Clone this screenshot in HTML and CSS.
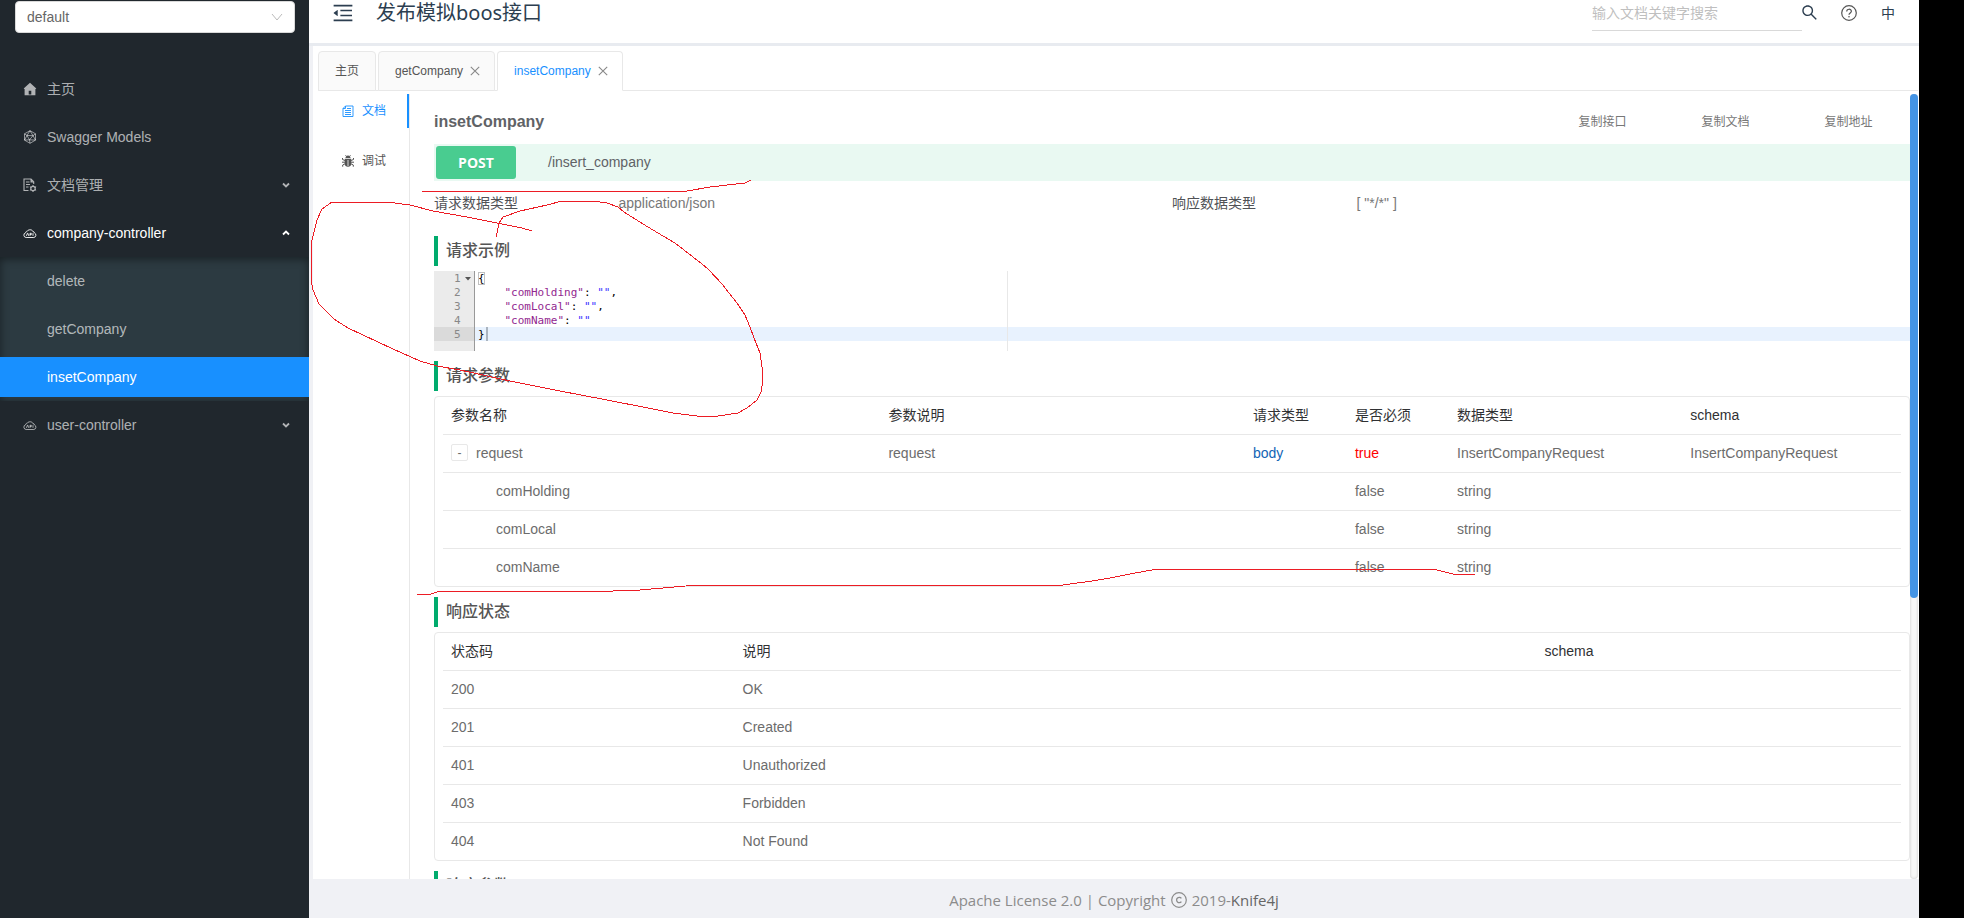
FILE: index.html
```html
<!DOCTYPE html>
<html lang="zh-CN">
<head>
<meta charset="utf-8">
<title>发布模拟boos接口</title>
<link rel="stylesheet" href="styles.css">
</head>
<body>
<svg class="sprite" aria-hidden="true">
  <symbol id="i-cloud" viewBox="0 0 14 14">
    <path d="M3.200 11.500a2.400 2.400 0 0 1-.6-4.700c.3-1.200 1-1.700 1.900-1.800.8-1.600 4.600-1.800 5.300.4 1 .1 1.500.7 1.600 1.500a2.400 2.400 0 0 1-.6 4.600z" fill="none" stroke="currentColor" stroke-width=".9"/>
    <path d="M3.400 9.800l1.100-2.600h.3l.9 2.600M7 9.800V7.300h1.300v1.300H7M10 7.200v2.600" fill="none" stroke="currentColor" stroke-width=".9"/>
  </symbol>
  <symbol id="i-chev" viewBox="0 0 8 8"><path d="M1 2.500l3 3 3-3" fill="none" stroke="currentColor" stroke-width="1.800"/></symbol>
  <symbol id="i-close" viewBox="0 0 10 10"><path d="M.8.8l8.400 8.400M9.200.8L.8 9.200" fill="none" stroke="currentColor" stroke-width="1.100"/></symbol>
</svg>
<div class="app">
  <aside class="sidebar">
    <div class="group">
      <select class="group-select" aria-label="分组"><option>default</option></select>
      <svg class="group-arrow" viewBox="0 0 12 8"><path d="M1 1l5 6 5-6" fill="none" stroke="currentColor"/></svg>
    </div>
    <nav class="menu">
      <a class="item" href="#"><svg class="mi" viewBox="0 0 14 14"><path fill="currentColor" fill-rule="evenodd" d="M7 .8l6.300 5.600-.6.700H12.400v6.100H1.600V7.100H1.300L.7 6.400zM5.700 8.800v3.600h2.600V8.800z"/></svg><span>主页</span></a>
      <a class="item" href="#"><svg class="mi" viewBox="0 0 14 14"><path d="M7 .7l5.500 3.100v6.300L7 13.300l-5.500-3.200V3.800zM7 .7L4 5.500l-2.500 4.600M7 .7l3 5 2.500 4.400M1.500 3.800L4 5.500l6 .2 2.500-1.900M4 5.500l2.500 4.300.5 3.500M10 5.700L6.500 9.800l-5 .3M6.500 9.800l6 .3" fill="none" stroke="currentColor" stroke-width=".8"/></svg><span>Swagger Models</span></a>
      <a class="item" href="#"><svg class="mi" viewBox="0 0 14 14"><path d="M5.500 12.500H1V1h7l2.700 2.700V6M3 4h3.500M3 6.500h4M3 9h2.500" fill="none" stroke="currentColor" stroke-width="1.100"/><path d="M7.500 1v3.500h3.200z" fill="currentColor"/><circle cx="10" cy="10.500" r="2.200" fill="none" stroke="currentColor" stroke-width="1.200"/><path d="M10 7v1.200M10 12.800V14M6.900 8.700l1.100.6M12 11.700l1.100.6M6.900 12.300l1.100-.6M12 9.300l1.100-.6" stroke="currentColor"/></svg><span>文档管理</span><svg class="chev"><use href="#i-chev"/></svg></a>
      <a class="item open" href="#"><svg class="mi"><use href="#i-cloud"/></svg><span>company-controller</span><svg class="chev up"><use href="#i-chev"/></svg></a>
      <div class="submenu">
        <a class="item sub" href="#">delete</a>
        <a class="item sub" href="#">getCompany</a>
        <a class="item sub active" href="#">insetCompany</a>
      </div>
      <a class="item" href="#"><svg class="mi"><use href="#i-cloud"/></svg><span>user-controller</span><svg class="chev"><use href="#i-chev"/></svg></a>
    </nav>
  </aside>

  <div class="main">
    <header class="header">
      <button class="icon-btn" aria-label="收起菜单"><svg class="fold" viewBox="0 0 1024 1024"><path fill="currentColor" d="M408 442h480c4.400 0 8-3.600 8-8v-56c0-4.400-3.600-8-8-8H408c-4.400 0-8 3.600-8 8v56c0 4.400 3.600 8 8 8zm-8 204c0 4.400 3.600 8 8 8h480c4.400 0 8-3.600 8-8v-56c0-4.400-3.600-8-8-8H408c-4.400 0-8 3.600-8 8v56zm504-486H120c-4.400 0-8 3.600-8 8v56c0 4.400 3.600 8 8 8h784c4.400 0 8-3.600 8-8v-56c0-4.400-3.600-8-8-8zm0 632H120c-4.400 0-8 3.600-8 8v56c0 4.400 3.600 8 8 8h784c4.400 0 8-3.600 8-8v-56c0-4.400-3.600-8-8-8zM115.400 518.900L271.700 642c5.800 4.600 14.400.5 14.400-6.900V388.900c0-7.400-8.500-11.500-14.400-6.900L115.400 505.100a8.740 8.740 0 0 0 0 13.800z"/></svg></button>
      <h1 class="title">发布模拟boos接口</h1>
      <div class="tools">
        <input class="search" type="text" placeholder="输入文档关键字搜索" aria-label="搜索">
        <button class="icon-btn" aria-label="搜索"><svg class="find" viewBox="96 96 832 832"><path fill="currentColor" d="M909.600 854.500L649.900 594.800C690.200 542.700 712 479 712 412c0-80.200-31.300-155.400-87.900-212.100-56.600-56.700-132-87.900-212.100-87.900s-155.500 31.300-212.100 87.900C143.200 256.500 112 331.800 112 412c0 80.100 31.300 155.500 87.900 212.100C256.500 680.800 331.800 712 412 712c67 0 130.600-21.800 182.700-62l259.700 259.600a8.200 8.200 0 0 0 11.600 0l43.600-43.500a8.200 8.200 0 0 0 0-11.600zM570.400 570.400C528 612.700 471.800 636 412 636s-116-23.300-158.400-65.600C211.300 528 188 471.800 188 412s23.300-116.100 65.600-158.400C296 211.300 352.200 188 412 188s116.100 23.200 158.400 65.600S636 352.200 636 412s-23.300 116.100-65.600 158.400z"/></svg></button>
        <button class="icon-btn help" aria-label="帮助"><svg class="q" viewBox="0 0 16 16"><circle cx="8" cy="8" r="7.300" fill="none" stroke="currentColor" stroke-width="1.200"/><path d="M5.700 6.500c0-3 4.700-3 4.700-.2C10.400 8 8 8 8 9.800" fill="none" stroke="currentColor" stroke-width="1.200"/><circle cx="8" cy="11.700" r=".8" fill="currentColor"/></svg></button>
        <button class="icon-btn lang">中</button>
      </div>
    </header>

    <main class="page">
      <div class="tabs">
        <button class="tab">主页</button>
        <button class="tab">getCompany<svg class="x"><use href="#i-close"/></svg></button>
        <button class="tab on">insetCompany<svg class="x"><use href="#i-close"/></svg></button>
      </div>

      <div class="body">
        <div class="vtabs">
          <button class="vtab on"><svg class="vi" viewBox="0 0 12 12"><path d="M3.500 1h7.500v10.500H1V3.500zM3.500 1v2.500H1M5 3.500h4M3 5.500h6M3 7.500h6M3 9.500h6" fill="none" stroke="currentColor" stroke-width=".9"/></svg>文档</button>
          <button class="vtab"><svg class="vi" viewBox="0 0 12 12"><path d="M3.500 3a2.500 2.500 0 0 1 5 0z" fill="currentColor"/><path d="M2.800 3.700h6.400v5a3.200 3 0 0 1-6.400 0z" fill="currentColor"/><path d="M.5 3v1.500L3 5.500M11.500 3v1.500L9 5.500M0 7.200h12M.7 11.700V10L3 8.800M11.300 11.700V10L9 8.800M3.500.3l1 1M8.500.3l-1 1" fill="none" stroke="currentColor"/><path d="M6 5v6" stroke="#fff" stroke-width=".8"/></svg>调试</button>
        </div>

        <section class="doc">
          <div class="doc-head">
            <h2 class="doc-title">insetCompany</h2>
            <button class="copy">复制接口</button>
            <button class="copy">复制文档</button>
            <button class="copy">复制地址</button>
          </div>
          <div class="api"><span class="method">POST</span><span class="path">/insert_company</span></div>
          <div class="types">
            <span class="k">请求数据类型</span><span>application/json</span>
            <span class="k">响应数据类型</span><span>[ "*/*" ]</span>
          </div>

          <h3 class="sec">请求示例</h3>
          <div class="editor">
            <div class="gutter">
              <div class="ln"><span>1</span><svg class="tri" viewBox="0 0 6 4"><path d="M0 0h6L3 3.500z" fill="#555"/></svg></div>
              <div class="ln"><span>2</span></div>
              <div class="ln"><span>3</span></div>
              <div class="ln"><span>4</span></div>
              <div class="ln cur"><span>5</span></div>
            </div>
            <div class="code">
              <div class="row"><span class="br">{</span></div>
              <div class="row">    <b>"comHolding"</b>: <i>""</i>,</div>
              <div class="row">    <b>"comLocal"</b>: <i>""</i>,</div>
              <div class="row">    <b>"comName"</b>: <i>""</i></div>
              <div class="row cur">}<span class="caret"></span></div>
              <span class="margin-line"></span>
            </div>
          </div>

          <h3 class="sec">请求参数</h3>
          <div class="box">
            <table class="grid params">
              <colgroup><col class="w30"><col class="w25"><col class="w7"><col class="w7"><col class="w16"><col class="w15"></colgroup>
              <thead><tr><th>参数名称</th><th>参数说明</th><th>请求类型</th><th>是否必须</th><th>数据类型</th><th>schema</th></tr></thead>
              <tbody>
                <tr><td><div class="tree"><button class="minus" aria-label="收起">-</button>request</div></td><td>request</td><td class="blue">body</td><td class="red">true</td><td>InsertCompanyRequest</td><td>InsertCompanyRequest</td></tr>
                <tr><td class="child">comHolding</td><td></td><td></td><td>false</td><td>string</td><td></td></tr>
                <tr><td class="child">comLocal</td><td></td><td></td><td>false</td><td>string</td><td></td></tr>
                <tr><td class="child">comName</td><td></td><td></td><td>false</td><td>string</td><td></td></tr>
              </tbody>
            </table>
          </div>

          <h3 class="sec">响应状态</h3>
          <div class="box">
            <table class="grid">
              <colgroup><col class="w20"><col class="w55"><col class="w25"></colgroup>
              <thead><tr><th>状态码</th><th>说明</th><th>schema</th></tr></thead>
              <tbody>
                <tr><td>200</td><td>OK</td><td></td></tr>
                <tr><td>201</td><td>Created</td><td></td></tr>
                <tr><td>401</td><td>Unauthorized</td><td></td></tr>
                <tr><td>403</td><td>Forbidden</td><td></td></tr>
                <tr><td>404</td><td>Not Found</td><td></td></tr>
              </tbody>
            </table>
          </div>

          <h3 class="sec">响应参数</h3>
        </section>
        <div class="track"><div class="thumb"></div></div>
      </div>
    </main>

    <footer class="footer">
      <span>Apache License 2.0 | Copyright</span>
      <svg class="cr" viewBox="0 0 16 16"><circle cx="8" cy="8" r="7.300" fill="none" stroke="currentColor" stroke-width="1.200"/><path d="M10.400 6.300a2.700 2.700 0 1 0 0 3.400" fill="none" stroke="currentColor" stroke-width="1.300"/></svg>
      <span>2019-<a class="knife" href="#">Knife4j</a></span>
    </footer>
  </div>
</div>

<svg class="ink" viewBox="0 0 1964 918" aria-hidden="true">
  <polyline points="422,192 424,191 687,191 710,187 745,183 751,180"/>
  <polyline points="532,231 522,228 467,217 433,211 410,205 387,202 332,202 322,209 317,220 312,240 311,253 311,280 313,290 319,304 334,319 348,328 393,349 420,361 437,366 460,370 510,381 560,391 607,400 653,409 673,413 697,416 718,416 738,413 747,408 757,400 761,392 763,380 762,367 760,353 754,338 750,327 745,315 737,303 729,293 723,285 708,269 702,264 693,257 675,243 663,236 643,224 624,212 618,207 607,203 593,201 562,201 547,205 520,211 503,217 499,223 497,233 496,237"/>
  <polyline points="417,595 431,594 440,591 613,591 640,590 697,585 1049,585 1063,585 1092,581 1110,578 1135,573 1158,569 1433,569 1453,574 1475,574"/>
</svg>
</body>
</html>
```
FILE: styles.css
```css
* { box-sizing: border-box; }
html, body { height: 100%; }
body {
  margin: 0;
  padding-right: 45px;
  background: #000;
  overflow: hidden;
  font: 14px/20px "Liberation Sans", "Noto Sans CJK SC", sans-serif;
  color: #606266;
}
h1, h2, h3 { margin: 0; font-weight: 400; }
a { color: inherit; text-decoration: none; }
button { padding: 0; border: 0; background: none; font: inherit; color: inherit; cursor: pointer; }
svg { display: block; flex: none; }
.sprite { position: absolute; width: 0; height: 0; }

.app { display: flex; height: 100%; }

/* sidebar */
.sidebar { flex: none; width: 309px; background: #20272d; color: rgba(255, 255, 255, .65); }
.group { position: relative; margin: 1px 14px 0 15px; }
.group-select {
  display: block;
  width: 100%;
  height: 32px;
  padding: 0 11px;
  border: 1px solid #d9d9d9;
  border-radius: 4px;
  background: #fff;
  color: #666;
  font: inherit;
  appearance: none;
}
.group-arrow { position: absolute; right: 12px; top: 12px; width: 12px; height: 8px; color: #bbb; }
.menu { padding-top: 32px; }
.item { display: flex; align-items: center; gap: 10px; height: 40px; margin: 4px 0 8px; padding: 0 19px 0 23px; }
.menu > .item + .item { margin-top: 8px; }
.mi { width: 14px; height: 14px; }
.chev { width: 8px; height: 8px; margin-left: auto; }
.up { transform: rotate(180deg); }
.open { color: #fff; margin-bottom: 4px; }
.submenu { padding: 4px 0; background: #2c3a41; box-shadow: inset 0 2px 8px rgba(0, 0, 0, .45); display: grid; gap: 8px; }
.sub { margin: 0; padding-left: 47px; }
.active { background: #1890ff; color: #fff; }

/* main */
.main { flex: 1; min-width: 0; display: flex; flex-direction: column; background: #f0f1f5; }
.header { flex: none; display: flex; align-items: center; height: 43px; padding: 0 19px 18px 22px; background: #fff; color: #2c3e50; box-shadow: 0 3px 0 #e8ebf0; }
.icon-btn { display: flex; }
.fold { width: 24px; height: 24px; }
.title { margin-left: 21px; font: 20px/24px "Noto Sans", "Noto Sans CJK SC", sans-serif; }
.tools { display: flex; align-items: center; margin-left: auto; }
.search { width: 210px; height: 28px; margin-top: 8px; padding: 0 0 6px; border: 0; border-bottom: 1px solid #d9d9d9; background: none; font: inherit; }
.search::placeholder { color: #bfbfbf; }
.find { width: 15px; height: 15px; }
.help { margin-left: 24px; color: #555; }
.q { width: 16px; height: 16px; }
.lang { margin: 0 5px 0 24px; }

.page { flex: 1; min-height: 0; display: flex; flex-direction: column; margin: 3px 0 0 4px; padding: 5px 1px 0 5px; background: #fff; }
.tabs { flex: none; display: flex; gap: 2px; height: 40px; border-bottom: 1px solid #e8e8e8; }
.tab { display: flex; align-items: center; gap: 7px; height: 40px; padding: 0 16px; border: 1px solid #e8e8e8; border-radius: 4px 4px 0 0; background: #fafafa; font-size: 12px; color: #555; }
.tab.on { background: #fff; color: #1890ff; border-bottom-color: #fff; }
.x { width: 10px; height: 10px; margin-right: -2px; color: #888; }

.body { flex: 1; min-height: 0; display: flex; margin-top: 3px; }
.vtabs { flex: none; width: 91px; }
.vtab { display: flex; align-items: center; gap: 8px; width: 100%; height: 34px; padding-left: 24px; font-size: 12px; color: #555; }
.vtab + .vtab { height: 50px; margin-top: 8px; }
.vtab.on { color: #1890ff; border-right: 2px solid #1890ff; }
.vi { width: 12px; height: 12px; }

.doc { flex: 1; min-width: 0; overflow: hidden; border-left: 1px solid #e8e8e8; padding-left: 24px; }
.doc-head { display: grid; grid-template-columns: 18fr 2fr 2fr 2fr; align-items: center; height: 50px; padding-top: 6px; }
.doc-title { font-size: 16px; font-weight: 700; }
.copy { font-size: 12px; color: #777; }
.api { display: flex; align-items: center; height: 37px; padding-left: 2px; background: #e9f9f2; }
.method { width: 80px; height: 33px; border-radius: 3px; background: #49cc90; color: #fff; font: 700 14px/33px "Open Sans", sans-serif; text-align: center; text-shadow: 0 1px 0 rgba(0, 0, 0, .1); }
.path { margin-left: 32px; padding-bottom: 2px; }
.types { display: grid; grid-template-columns: 3fr 9fr 3fr 9fr; align-items: center; height: 43px; margin-bottom: 12px; color: #777; }
.k { color: #505256; }

.sec { height: 30px; margin-bottom: 5px; padding-left: 8px; border-left: 4px solid #00ab6d; font-size: 16px; font-weight: 500; line-height: 30px; color: #555; }

.editor { display: flex; height: 80px; margin-bottom: 10px; font: 11px/16px "DejaVu Sans Mono", monospace; color: #000; }
.gutter { width: 41px; background: #ebebeb; border-right: 1px solid #999; color: #888; }
.ln { display: flex; height: 14px; padding-left: 20px; }
.ln.cur { background: #dadada; }
.tri { width: 6px; height: 4px; margin: 6px 0 0 4px; }
.code { position: relative; flex: 1; }
.row { height: 14px; padding-left: 3px; white-space: pre; }
.row.cur { display: flex; background: #e8f2fe; }
.row b { font-weight: 400; color: #92278f; }
.row i { font-style: normal; color: #3a32ff; }
.br { outline: 1px solid #c0c0c0; outline-offset: -1px; }
.caret { width: 2px; height: 14px; margin-left: 1px; background: #aab4bf; }
.margin-line { position: absolute; left: 532px; top: 0; bottom: 0; width: 1px; background: #e8e8e8; }

.box { margin-bottom: 10px; padding: 0 8px; border: 1px solid #e8e8e8; border-radius: 4px; }
.grid { width: 100%; table-layout: fixed; border-collapse: separate; border-spacing: 0; }
.grid th, .grid td { height: 38px; padding: 0 8px 2px; border-bottom: 1px solid #e8e8e8; text-align: left; font-weight: 400; }
.grid th { color: #303133; }
.grid td { color: #6c6c6c; }
.grid tbody tr:last-child td { height: 37px; border-bottom: 0; }
.tree { display: flex; align-items: center; gap: 8px; }
.minus { width: 17px; height: 17px; border: 1px solid #e8e8e8; border-radius: 2px; background: #fff; line-height: 14px; font-size: 12px; }
.grid .child { padding-left: 53px; }
.grid .blue { color: #1264b5; }
.grid .red { color: #f00; }
.w30 { width: 30%; } .w25 { width: 25%; } .w7 { width: 7%; } .w16 { width: 16%; } .w15 { width: 15%; }
.w20 { width: 20%; } .w55 { width: 55%; }

.track { flex: none; width: 8px; border-radius: 4px; background: #f7f7f7; box-shadow: inset 0 0 3px rgba(0, 0, 0, .2); }
.thumb { height: 64.2%; border-radius: 4px; background: #4494e5; }

.footer { flex: none; display: flex; align-items: center; justify-content: center; gap: 5px; height: 39px; padding-top: 3px; font: 15px/24px "Open Sans", sans-serif; color: #8c8c8c; }
.cr { width: 16px; height: 16px; }
.knife { color: #666; }

/* freehand annotation over the page */
.ink { position: absolute; left: 0; top: 0; width: 1964px; height: 918px; pointer-events: none; }
.ink polyline { fill: none; stroke: #ec1c24; shape-rendering: crispEdges; }
```
